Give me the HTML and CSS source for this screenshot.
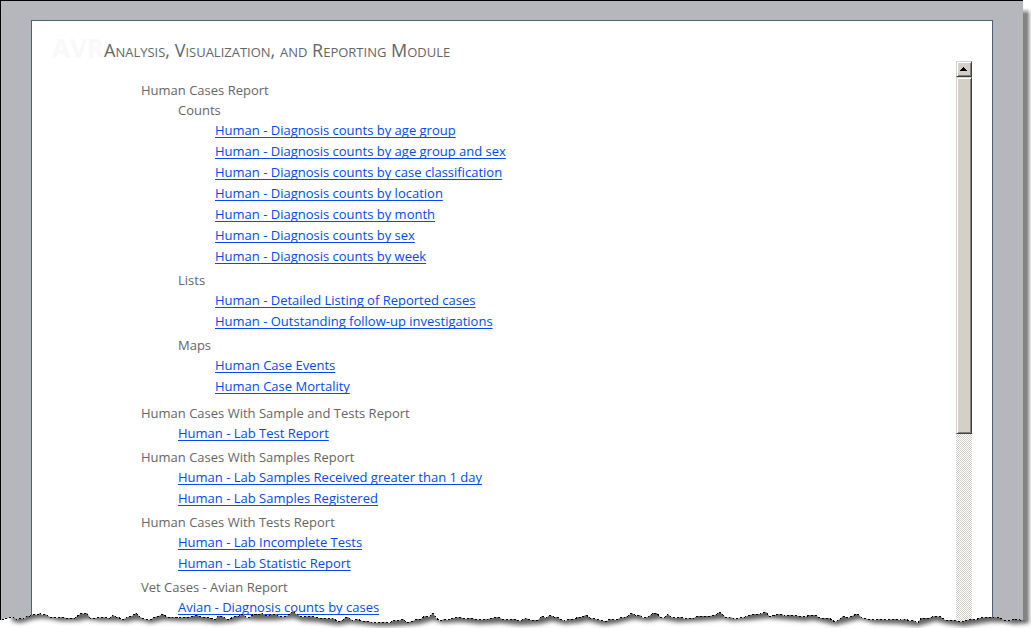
FILE: index.html
```html
<!DOCTYPE html>
<html lang="en">
<head>
<meta charset="utf-8">
<title>Analysis, Visualization, and Reporting Module</title>
<link rel="stylesheet" href="styles.css">
</head>
<body>
<div class="page">
  <div class="backdrop">
    <main class="panel">
      <header class="banner">
        <span class="mark">AVR</span>
        <h1 class="title">Analysis, Visualization, and Reporting Module</h1>
      </header>
      <div class="viewer">
        <ul class="tree">
          <li class="group"><span class="heading">Human Cases Report</span>
            <ul class="branch">
              <li class="group"><span class="heading">Counts</span>
                <ul class="branch">
                  <li class="item"><a href="#">Human - Diagnosis counts by age group</a></li>
                  <li class="item"><a href="#">Human - Diagnosis counts by age group and sex</a></li>
                  <li class="item"><a href="#">Human - Diagnosis counts by case classification</a></li>
                  <li class="item"><a href="#">Human - Diagnosis counts by location</a></li>
                  <li class="item"><a href="#">Human - Diagnosis counts by month</a></li>
                  <li class="item"><a href="#">Human - Diagnosis counts by sex</a></li>
                  <li class="item"><a href="#">Human - Diagnosis counts by week</a></li>
                </ul>
              </li>
              <li class="group"><span class="heading">Lists</span>
                <ul class="branch">
                  <li class="item"><a href="#">Human - Detailed Listing of Reported cases</a></li>
                  <li class="item"><a href="#">Human - Outstanding follow-up investigations</a></li>
                </ul>
              </li>
              <li class="group"><span class="heading">Maps</span>
                <ul class="branch">
                  <li class="item"><a href="#">Human Case Events</a></li>
                  <li class="item"><a href="#">Human Case Mortality</a></li>
                </ul>
              </li>
            </ul>
          </li>
          <li class="group"><span class="heading">Human Cases With Sample and Tests Report</span>
            <ul class="branch">
              <li class="item"><a href="#">Human - Lab Test Report</a></li>
            </ul>
          </li>
          <li class="group"><span class="heading">Human Cases With Samples Report</span>
            <ul class="branch">
              <li class="item"><a href="#">Human - Lab Samples Received greater than 1 day</a></li>
              <li class="item"><a href="#">Human - Lab Samples Registered</a></li>
            </ul>
          </li>
          <li class="group"><span class="heading">Human Cases With Tests Report</span>
            <ul class="branch">
              <li class="item"><a href="#">Human - Lab Incomplete Tests</a></li>
              <li class="item"><a href="#">Human - Lab Statistic Report</a></li>
            </ul>
          </li>
          <li class="group"><span class="heading">Vet Cases - Avian Report</span>
            <ul class="branch">
              <li class="item"><a href="#">Avian - Diagnosis counts by cases</a></li>
            </ul>
          </li>
        </ul>
        <div class="scrollbar">
          <button class="scroll-up" type="button" aria-label="Scroll up">
            <svg width="8" height="4" viewBox="0 0 8 4" shape-rendering="crispEdges" aria-hidden="true"><path d="M3 0h1v1h1v1h1v1h1v1H0V3h1V2h1V1h1z"/></svg>
          </button>
          <div class="thumb"></div>
        </div>
      </div>
    </main>
  </div>
  <div class="side-shadow"></div>
  <svg class="torn" viewBox="0 2 1031 20" preserveAspectRatio="none" aria-hidden="true">
    <defs>
      <path id="edge" d="M-2 14L2 14L5 12L7 13L10 11L14 11L17 14L20 12L24 13L27 10L30 10L34 8L37 9L40 7L42 9L45 8L50 11L54 11L57 12L62 11L66 12L75 12L79 9L82 7L84 8L87 7L90 12L97 12L103 11L107 12L110 12L113 9L116 11L118 11L122 14L128 11L132 10L136 7L140 11L144 13L150 14L155 11L159 10L163 8L167 11L173 11L178 12L185 11L190 11L197 9L201 11L205 11L210 12L215 14L218 10L222 10L228 14L235 10L239 10L243 8L247 12L250 11L254 8L258 9L262 7L266 10L270 9L275 8L281 11L287 10L293 5L296 8L302 11L310 10L318 12L324 12L330 13L333 12L338 16L343 14L345 12L348 11L353 15L357 13L362 15L367 15L375 17L383 16L390 17L394 14L398 15L403 13L406 16L409 16L413 15L417 13L421 13L425 10L429 11L433 7L436 12L440 15L444 13L448 14L454 12L460 11L465 13L470 12L480 14L488 13L498 11L502 13L507 14L514 13L520 15L526 12L530 14L534 14L538 14L542 10L546 12L550 9L554 11L557 11L560 13L565 15L570 13L575 13L578 11L582 11L586 9L590 12L595 13L603 15L607 15L610 13L616 14L620 12L625 11L628 10L632 7L636 10L640 9L643 12L648 11L653 7L657 7L660 11L664 12L668 8L671 11L675 12L681 11L685 13L690 12L694 12L697 10L705 10L710 10L715 9L720 6L723 9L726 12L730 11L736 13L745 11L750 9L755 8L760 8L766 6L770 11L775 9L780 8L782 8L784 10L790 9L798 10L805 11L810 9L815 9L820 12L825 12L829 12L835 16L840 13L843 10L848 12L852 10L857 8L859 9L862 12L868 13L875 14L880 13L887 14L895 13L900 14L905 13L910 15L913 14L918 17L921 12L925 12L929 12L935 10L941 11L945 14L952 14L957 15L962 16L968 14L972 13L975 14L980 12L988 11L994 11L1000 12L1004 14L1010 15L1014 13L1020 14L1023 14H1035V30H-2z"/>
      <clipPath id="gap"><use href="#edge"/></clipPath>
      <clipPath id="sheet"><rect width="1023" height="30"/></clipPath>
      <filter id="soft" x="-5%" y="-50%" width="110%" height="200%"><feGaussianBlur stdDeviation="2"/></filter>
    </defs>
    <use href="#edge" class="torn-paper"/>
    <g clip-path="url(#gap)">
      <path class="torn-shadow" filter="url(#soft)" d="M12 -20V15L20 17L27 15L34 13L42 12L52 13L60 15L78 15L86 13L94 14L100 15L118 15L126 16L136 14L144 15L150 17L164 14L180 15L200 15L216 17L232 16L245 13L258 14L275 14L294 12L302 15L318 16L338 19L350 17L360 18L378 20L392 20L408 19L420 18L434 14L442 17L462 16L480 18L500 17L520 19L540 18L552 15L565 18L578 17L588 15L604 19L618 17L634 13L648 15L660 13L678 16L698 15L712 14L724 13L732 15L750 14L768 12L780 13L804 15L814 14L836 19L848 16L860 13L874 17L900 18L918 20L936 15L948 18L964 20L990 16L1004 16L1014 18L1029 17V-20z"/>
    </g>
    <g clip-path="url(#sheet)"><use href="#edge" class="torn-line"/></g>
  </svg>
</div>
</body>
</html>
```
FILE: styles.css
```css
* {
  box-sizing: border-box;
}

body {
  margin: 0;
  background: #fff;
  color: #666;
  font: 13px/20px "Open Sans", "Noto Sans", sans-serif;
}

.page {
  position: relative;
  display: flex;
  height: 100vh;
  overflow: hidden;
}

.backdrop {
  flex: 1;
  display: flex;
  min-width: 0;
  padding: 19px 30px 0;
  border-top: 1px solid #000;
  border-left: 1px solid #000;
  background: #b6b7bc;
}

.panel {
  flex: 1;
  display: flex;
  flex-direction: column;
  min-width: 0;
  padding: 0 20px;
  border: 1px solid #496077;
  border-bottom: 0;
  background: #fff;
}

.side-shadow {
  width: 8px;
  margin-top: 8px;
  background: linear-gradient(90deg, #808080 0, #858585 4px, #bbb 6px, #eee 8px);
  mask-image: linear-gradient(transparent, #000 6px);
}

.banner {
  display: flex;
  flex: none;
  align-items: center;
  height: 40px;
  padding-top: 14px;
}

.mark {
  width: 52px;
  color: #f9f9fb;
  font-size: 26px;
  font-weight: 700;
}

.title {
  margin: 0;
  padding-top: 4px;
  font-size: 18px;
  font-weight: 400;
  font-variant: small-caps;
  white-space: nowrap;
}

.viewer {
  flex: 1;
  display: flex;
  min-height: 0;
}

.tree {
  flex: 1;
  margin: 0;
  padding: 19px 0 0 89px;
  list-style: none;
}

.branch {
  margin: 0;
  padding: 0 0 3px 37px;
  list-style: none;
}

.heading {
  display: block;
}

.item {
  height: 21px;
}

.item a {
  color: #034af3;
  text-decoration: underline;
  text-underline-offset: 2px;
  text-decoration-skip-ink: none;
}

.scrollbar {
  display: flex;
  flex-direction: column;
  width: 16px;
  background: repeating-conic-gradient(#d4d0c8 0 25%, #fff 0 50%) 0 0 / 2px 2px;
}

.scroll-up,
.thumb {
  border: 1px solid;
  border-color: #d4d0c8 #404040 #404040 #d4d0c8;
  background: #d4d0c8;
  box-shadow: inset 1px 1px #fff, inset -1px -1px #808080;
}

.scroll-up {
  display: grid;
  place-items: center;
  height: 16px;
  padding: 0;
}

.thumb {
  height: 63%;
}

.torn {
  position: absolute;
  left: 0;
  bottom: 0;
  width: 100%;
  height: 20px;
}

.torn-paper {
  fill: #fff;
}

.torn-shadow {
  fill: #606060;
}

.torn-line {
  fill: none;
  stroke: #000;
  stroke-dasharray: 2 2;
  shape-rendering: crispEdges;
}
```
